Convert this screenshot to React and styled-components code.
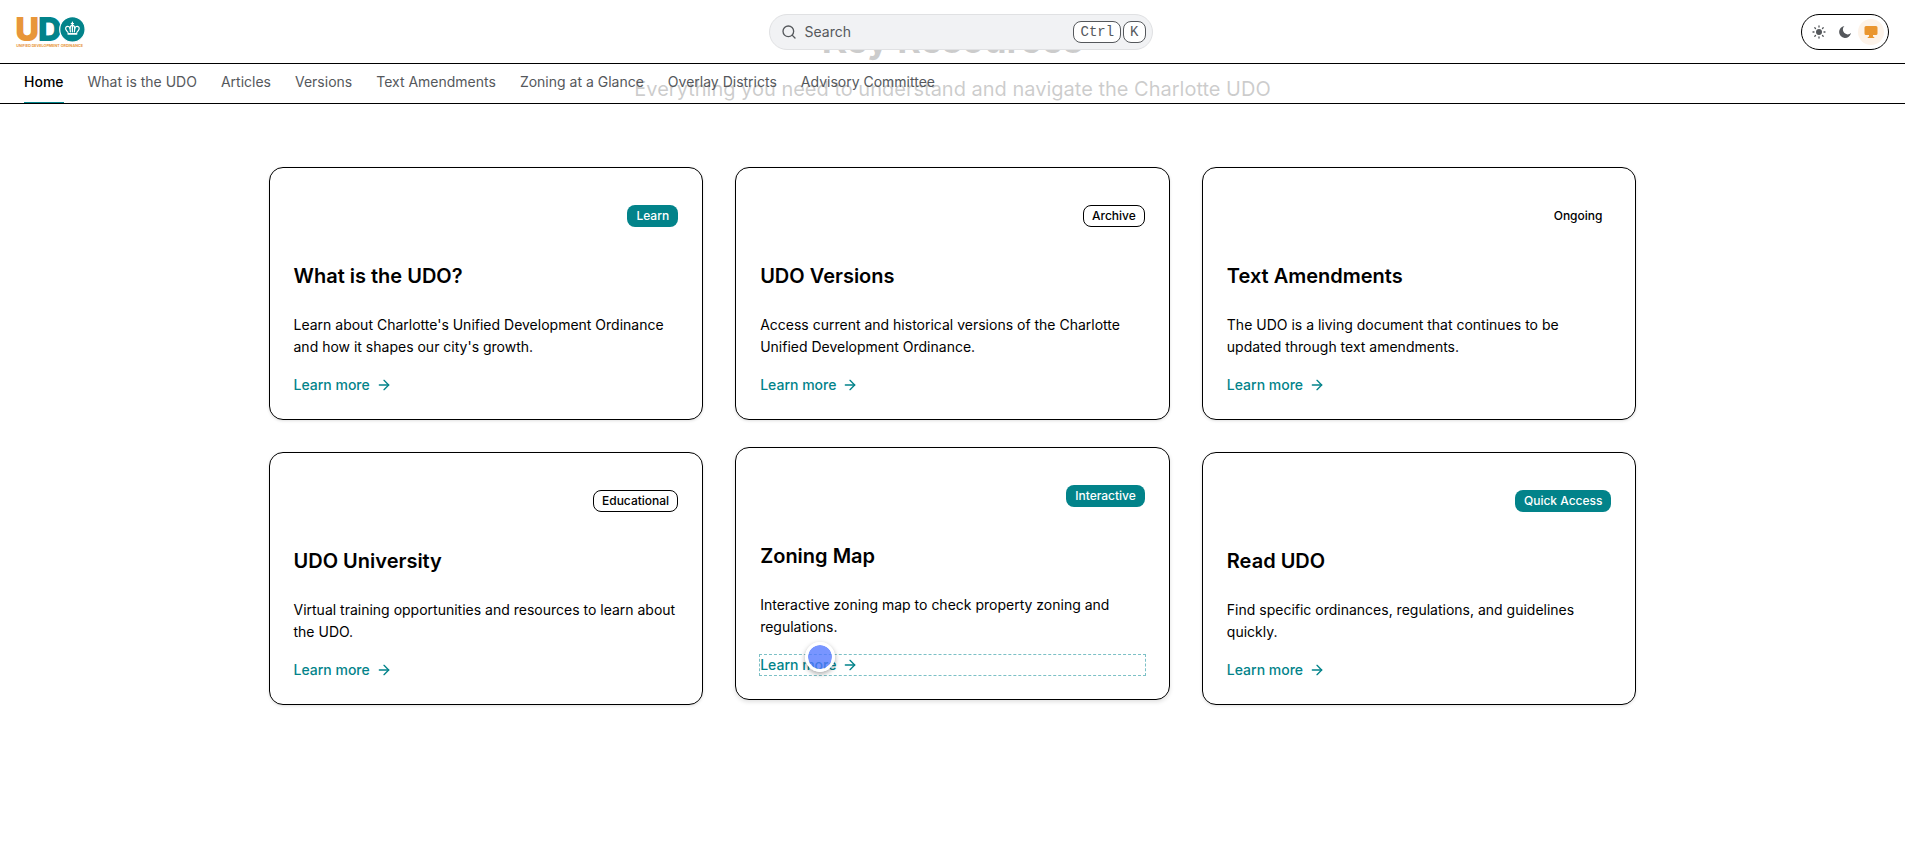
import React from "react";
import styled, { createGlobalStyle, css } from "styled-components";
import { Search, ArrowRight } from "lucide-react";

const GlobalStyle = createGlobalStyle`
  *, *::before, *::after { box-sizing: border-box; }
  body {
    margin: 0;
    background: #fff;
    color: #000;
    font-family: Inter, "Liberation Sans", sans-serif;
    font-size: 14px;
    line-height: 20px;
  }
  h2, h3, p { margin: 0; }
  a { color: inherit; text-decoration: none; }
  button { font: inherit; color: inherit; cursor: pointer; }
`;

const teal = "#02838a";
const orange = "#e8963a";

const SiteHeader = styled.header`
  position: sticky;
  top: 0;
  z-index: 10;
  height: 104px;
  background: rgba(255, 255, 255, 0.8);
`;

const TopBar = styled.div`
  display: flex;
  align-items: center;
  justify-content: space-between;
  height: 64px;
  padding: 0 16px;
  border-bottom: 1px solid #000;
`;

const LogoLink = styled.a`
  display: flex;
  width: 104px;
`;

const SearchButton = styled.button`
  display: flex;
  align-items: center;
  gap: 8px;
  width: 384px;
  height: 36px;
  padding: 0 6px 0 11px;
  border: 1px solid #e0e1e3;
  border-radius: 18px;
  background: #f1f2f4;
  color: #55585c;
`;

const Keys = styled.span`
  display: flex;
  gap: 2px;
  margin-left: auto;
`;

const Key = styled.kbd`
  height: 22px;
  padding: 0 6px;
  border: 1px solid #55585c;
  border-radius: 8px;
  background: #fff;
  font: 14px/20px "Liberation Mono", monospace;
`;

const ThemeSwitch = styled.div`
  display: flex;
  align-items: center;
  height: 36px;
  padding: 0 4px;
  border: 1px solid #000;
  border-radius: 18px;
`;

const ThemeButton = styled.button`
  display: flex;
  align-items: center;
  justify-content: center;
  width: 26px;
  height: 26px;
  padding: 0;
  border: 0;
  border-radius: 50%;
  background: ${(p) => (p.$active ? "#fdf3e9" : "transparent")};
  color: ${(p) => (p.$active ? "#ea962f" : "#54575b")};
`;

const Nav = styled.nav`
  display: flex;
  gap: 24px;
  height: 40px;
  padding: 0 24px;
  border-bottom: 1px solid #000;
`;

const NavLink = styled.a`
  padding: 8px 0;
  border-bottom: 1px solid ${(p) => (p.$active ? teal : "transparent")};
  color: ${(p) => (p.$active ? "#000" : "#55585c")};
  font-weight: ${(p) => (p.$active ? 500 : 400)};
`;

const Main = styled.main`
  max-width: 1400px;
  margin: 0 auto;
  padding: 0 16px 144px;
`;

const Intro = styled.div`
  margin-top: -85px;
  margin-bottom: 64px;
  text-align: center;
`;

const Heading = styled.h2`
  margin-bottom: 14px;
  font-size: 36px;
  line-height: 42px;
  font-weight: 700;
`;

const Subtitle = styled.p`
  font-size: 20px;
  line-height: 28px;
`;

const CardGrid = styled.div`
  display: grid;
  grid-template-columns: repeat(3, minmax(0, 1fr));
  gap: 32px;
`;

const Card = styled.article`
  padding: 24px;
  border: 1px solid #000;
  border-radius: 14px;
  background: #fff;
  box-shadow: 0 1px 3px rgba(0, 0, 0, 0.12);
  ${(p) => p.$raised && css`
    transform: translateY(-5px);
    box-shadow: 0 2px 4px rgba(0, 0, 0, 0.12);
  `}
`;

const CardTop = styled.div`
  display: flex;
  align-items: center;
  justify-content: flex-end;
  height: 48px;
`;

const Badge = styled.span`
  padding: 2px 8px;
  border: 1px solid transparent;
  border-radius: 8px;
  font-size: 12px;
  line-height: 16px;
  font-weight: 500;
  ${(p) => p.$kind === "solid" && css`
    background: ${teal};
    color: #fff;
  `}
  ${(p) => p.$kind === "outline" && css`
    border-color: #000;
  `}
`;

const CardTitle = styled.h3`
  margin: 22px 0 24px;
  font-size: 20px;
  line-height: 28px;
  font-weight: 600;
`;

const CardText = styled.p`
  margin-bottom: 17px;
  line-height: 22px;
`;

const MoreLink = styled.a`
  position: relative;
  display: flex;
  align-items: center;
  gap: 6px;
  color: ${teal};
  font-weight: 500;
  outline: ${(p) => (p.$focused ? "1px dashed #7cc0c6" : "none")};
`;

const Pointer = styled.span`
  position: absolute;
  left: 45px;
  top: -13px;
  width: 30px;
  height: 30px;
  border: 3px solid #fff;
  border-radius: 50%;
  background: rgba(82, 119, 255, 0.78);
  background-clip: padding-box;
  box-shadow: 0 2px 5px rgba(0, 0, 0, 0.35);
`;

const LogoMark = styled.svg`
  display: block;
  overflow: visible;
  font-family: Inter, "Liberation Sans", sans-serif;
`;

const navItems = [
  "Home", "What is the UDO", "Articles", "Versions", "Text Amendments",
  "Zoning at a Glance", "Overlay Districts", "Advisory Committee",
];

const cards = [
  { title: "What is the UDO?", badge: "Learn", kind: "solid", text: "Learn about Charlotte's Unified Development Ordinance and how it shapes our city's growth." },
  { title: "UDO Versions", badge: "Archive", kind: "outline", text: "Access current and historical versions of the Charlotte Unified Development Ordinance." },
  { title: "Text Amendments", badge: "Ongoing", kind: "plain", text: "The UDO is a living document that continues to be updated through text amendments." },
  { title: "UDO University", badge: "Educational", kind: "outline", text: "Virtual training opportunities and resources to learn about the UDO." },
  { title: "Zoning Map", badge: "Interactive", kind: "solid", text: "Interactive zoning map to check property zoning and regulations.", active: true },
  { title: "Read UDO", badge: "Quick Access", kind: "solid", text: "Find specific ordinances, regulations, and guidelines quickly." },
];

function Logo() {
  return (
    <LogoMark width="70" height="32" viewBox="0 0 700 320">
      <text x="-8" y="254" fontSize="330" fontWeight="900" fill={orange}>U</text>
      <text x="220" y="254" fontSize="330" fontWeight="900" fill={teal}>D</text>
      <g transform="translate(6 0)">
        <circle cx="558" cy="134" r="127" fill={teal} stroke="#fff" strokeWidth="12" />
        <g fill="none" stroke="#fff" strokeWidth="12" strokeLinecap="round" strokeLinejoin="round">
          <path d="M514 164C496 146 484 126 494 112C508 96 530 106 534 124C538 96 552 92 558 92C564 92 578 96 582 124C586 106 608 96 622 112C632 126 620 146 602 164" />
          <path d="M534 124 538 158M582 124 578 158M558 92V158M558 62V90M547 75H569" />
          <path d="M516 178H600" strokeWidth="18" />
        </g>
      </g>
      <text x="2" y="308" fontSize="37" fontWeight="700" fill={orange}>UNIFIED DEVELOPMENT ORDINANCE</text>
    </LogoMark>
  );
}

function SunIcon() {
  return (
    <svg width="14" height="14" viewBox="0 0 14 14" fill="currentColor">
      <circle cx="7" cy="7" r="3" />
      <path d="M7 1v1M7 12v1M1 7h1M12 7h1M2.8 2.8l.7.7M10.5 10.5l.7.7M11.2 2.8l-.7.7M3.5 10.5l-.7.7" stroke="currentColor" strokeWidth="1.3" strokeLinecap="round" />
    </svg>
  );
}

function MoonIcon() {
  return (
    <svg width="14" height="14" viewBox="0 0 14 14" fill="currentColor">
      <path d="M6.4 1A6 6 0 1 0 13 8.1 3.9 3.9 0 0 1 6.4 1Z" />
    </svg>
  );
}

function MonitorIcon() {
  return (
    <svg width="14" height="14" viewBox="0 0 14 14" fill="currentColor">
      <path d="M2 1h10a1.5 1.5 0 0 1 1.5 1.5v6A1.5 1.5 0 0 1 12 10H9v1.6l1.3.6V13H3.7v-.8l1.3-.6V10H2A1.5 1.5 0 0 1 .5 8.5v-6A1.5 1.5 0 0 1 2 1Z" />
    </svg>
  );
}

export default function App() {
  return (
    <>
      <GlobalStyle />
      <SiteHeader>
        <TopBar>
          <LogoLink href="#home" aria-label="UDO home"><Logo /></LogoLink>
          <SearchButton type="button">
            <Search size={16} />
            Search
            <Keys><Key>Ctrl</Key><Key>K</Key></Keys>
          </SearchButton>
          <ThemeSwitch role="group" aria-label="Theme">
            <ThemeButton type="button" aria-label="Light"><SunIcon /></ThemeButton>
            <ThemeButton type="button" aria-label="Dark"><MoonIcon /></ThemeButton>
            <ThemeButton type="button" aria-label="System" $active><MonitorIcon /></ThemeButton>
          </ThemeSwitch>
        </TopBar>
        <Nav>
          {navItems.map((item, i) => (
            <NavLink key={item} href="#" $active={i === 0}>{item}</NavLink>
          ))}
        </Nav>
      </SiteHeader>
      <Main>
        <Intro>
          <Heading>Key Resources</Heading>
          <Subtitle>Everything you need to understand and navigate the Charlotte UDO</Subtitle>
        </Intro>
        <CardGrid>
          {cards.map((card) => (
            <Card key={card.title} $raised={card.active}>
              <CardTop><Badge $kind={card.kind}>{card.badge}</Badge></CardTop>
              <CardTitle>{card.title}</CardTitle>
              <CardText>{card.text}</CardText>
              <MoreLink href="#" $focused={card.active}>
                Learn more
                <ArrowRight size={16} />
                {card.active && <Pointer aria-hidden="true" />}
              </MoreLink>
            </Card>
          ))}
        </CardGrid>
      </Main>
    </>
  );
}
